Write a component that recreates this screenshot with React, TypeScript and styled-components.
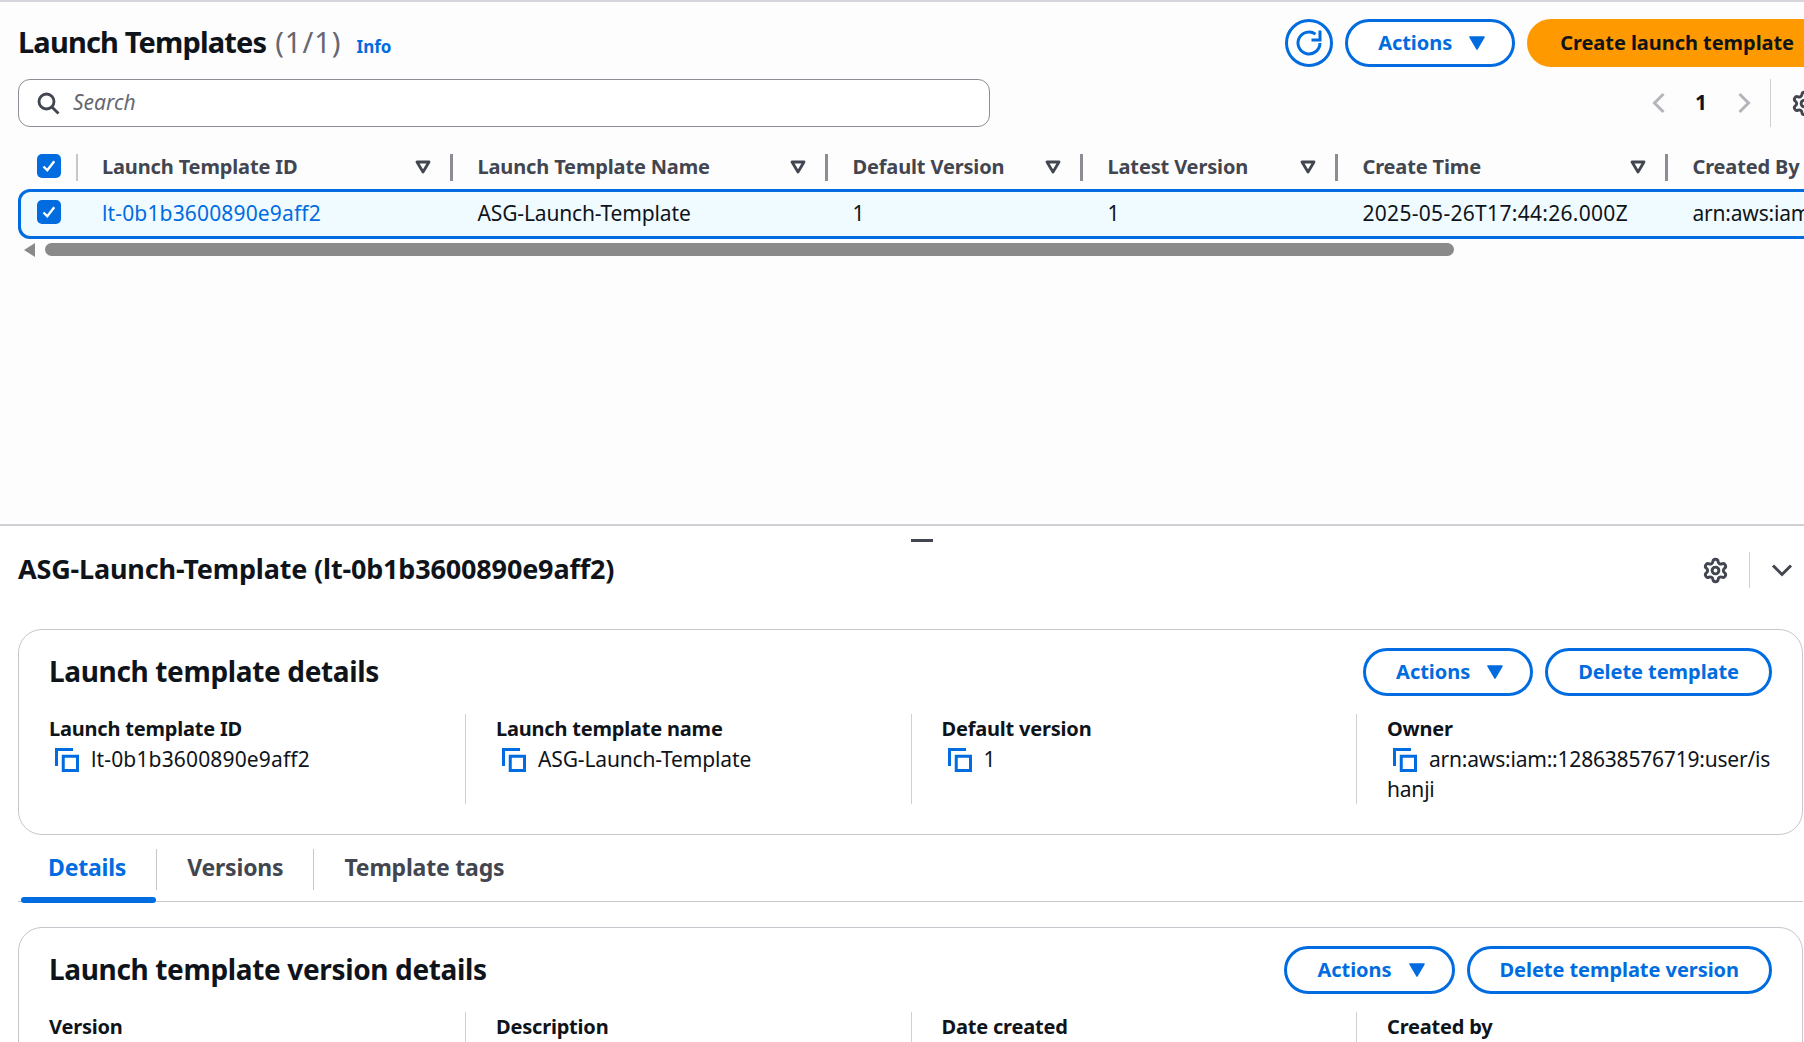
import React from "react";
import styled, { createGlobalStyle } from "styled-components";
import { Settings } from "lucide-react";

const GlobalStyle = createGlobalStyle`
  html, body {
    margin: 0;
    padding: 0;
    overflow: hidden;
    background: #fff;
  }
  body {
    font-family: "Noto Sans", "Open Sans", sans-serif;
    font-size: 21px;
    line-height: 30px;
    color: #0f141a;
  }
  * {
    box-sizing: border-box;
  }
`;

const Page = styled.div`
  width: 1804px;
  height: 1042px;
  overflow: hidden;
`;

const TopPanel = styled.section`
  height: 526px;
  padding-top: 19px;
  background: #fdfdfd;
  border-top: 2px solid #d5d5dc;
  border-bottom: 2px solid #d0d0d4;
`;

const HeaderRow = styled.div`
  display: flex;
  align-items: center;
  width: 1827px;
  height: 48px;
  margin-top: -2px;
  padding-left: 18px;
`;

const PageTitle = styled.h1`
  margin: -2px 0 0;
  font-size: 29px;
  line-height: 48px;
  font-weight: 700;
  letter-spacing: -0.85px;
`;

const Count = styled.span`
  font-weight: 400;
  color: #656871;
  margin-left: 9px;
  letter-spacing: 1px;
`;

const InfoLink = styled.a`
  color: #006ce0;
  font-size: 17px;
  font-weight: 700;
  margin-left: 15px;
  margin-top: 8px;
`;

const HeaderActions = styled.div`
  display: flex;
  gap: 12px;
  margin-left: auto;
`;

const IconButton = styled.button`
  display: flex;
  align-items: center;
  justify-content: center;
  width: 48px;
  height: 48px;
  padding: 0;
  background: #fff;
  border: 3px solid #006ce0;
  border-radius: 50%;
`;

const Button = styled.button`
  display: flex;
  align-items: center;
  justify-content: center;
  height: 48px;
  padding: 0 30px;
  font: 700 20px/30px "Noto Sans", sans-serif;
  letter-spacing: -0.05px;
  color: #006ce0;
  background: #fff;
  border: 3px solid #006ce0;
  border-radius: 24px;
  white-space: nowrap;
`;

const MenuButton = styled(Button)`
  gap: 17px;
  padding: 0 27px 0 30px;
`;

const PrimaryButton = styled(Button)`
  color: #0f141a;
  background: #ff9900;
  border-color: #ff9900;
`;

const SearchRow = styled.div`
  display: flex;
  align-items: center;
  width: 1818px;
  height: 48px;
  margin-top: 12px;
  padding-left: 18px;
`;

const SearchBox = styled.div`
  display: flex;
  align-items: center;
  gap: 13px;
  width: 972px;
  height: 48px;
  padding-left: 17px;
  color: #424650;
  background: #fff;
  border: 1.5px solid #8c8c94;
  border-radius: 12px;
`;

const SearchInput = styled.span`
  margin-top: -2px;
  font-style: italic;
  color: #656871;
`;

const Pagination = styled.div`
  display: flex;
  align-items: center;
  height: 48px;
  margin-left: auto;
`;

const PageNumber = styled.span`
  width: 61px;
  margin-top: -2px;
  text-align: center;
  font-weight: 700;
`;

const PageDivider = styled.div`
  width: 1.5px;
  height: 48px;
  margin: 0 20px 0 14px;
  background: #d0d0d4;
`;

const Columns = "59.5px 375.5px 375px 255px 255px 330px 300px";

const TableHeader = styled.div`
  display: grid;
  grid-template-columns: ${Columns};
  width: 1850px;
  height: 35px;
  margin: 27px 0 0 18px;
`;

const HeaderCell = styled.div`
  display: flex;
  align-items: center;
  justify-content: space-between;
  height: 27px;
  padding: 0 19px 2px 24.5px;
  font-size: 20px;
  font-weight: 700;
  color: #424650;
  letter-spacing: -0.15px;
  border-right: 3px solid #8c8c94;
`;

const SelectCell = styled.div`
  display: flex;
  align-items: flex-start;
  height: 27px;
  padding-left: 19px;
  border-right: 2px solid #c6c6cd;
`;

const TableRow = styled.div`
  display: grid;
  grid-template-columns: ${Columns};
  align-items: center;
  width: 1850px;
  height: 50px;
  margin-left: 18px;
  background: #f0fbff;
  border-radius: 12px 0 0 12px;
  box-shadow: inset 0 0 0 3px #006ce0;
`;

const RowSelect = styled.div`
  display: flex;
  align-items: center;
  padding: 0 0 4px 19px;
`;

const RowCell = styled.div<{ $spacing?: number }>`
  padding: 0 0 3px 24.5px;
  white-space: nowrap;
  letter-spacing: ${(p) => p.$spacing ?? 0}px;
`;

const RowLink = styled.a`
  color: #006ce0;
`;

const CheckBox = styled.span`
  display: flex;
  align-items: center;
  justify-content: center;
  width: 24px;
  height: 24px;
  background: #006ce0;
  border-radius: 5px;
`;

const ScrollTrack = styled.div`
  display: flex;
  align-items: center;
  height: 13px;
  margin: 4px 0 0 24px;
`;

const ScrollArrow = styled.span`
  width: 0;
  height: 0;
  border-top: 7px solid transparent;
  border-bottom: 7px solid transparent;
  border-right: 11px solid #8a8a8a;
  margin-right: 10px;
`;

const ScrollThumb = styled.div`
  width: 1409px;
  height: 13px;
  background: #8a8a8a;
  border-radius: 7px;
`;

const BottomPanel = styled.section`
  position: relative;
  padding: 26px 1px 0 18px;
`;

const DragHandle = styled.span`
  position: absolute;
  top: 13px;
  left: 911px;
  width: 22px;
  height: 3px;
  background: #424650;
`;

const SplitHeader = styled.div`
  display: flex;
  align-items: center;
  height: 36px;
`;

const SplitTitle = styled.h2`
  margin: -3px 0 0;
  font-size: 27px;
  line-height: 36px;
  font-weight: 700;
  letter-spacing: -0.17px;
`;

const SplitTools = styled.div`
  display: flex;
  align-items: center;
  margin-left: auto;
  padding-right: 9px;
`;

const SplitDivider = styled.div`
  width: 1.5px;
  height: 36px;
  margin: 0 20px 0 20px;
  background: #d0d0d4;
`;

const Card = styled.div<{ $top: number }>`
  margin-top: ${(p) => p.$top}px;
  padding: 18px 30px 30px 30px;
  background: #fff;
  border: 1.5px solid #c6c6cd;
  border-radius: 24px;
`;

const CardHeader = styled.div`
  display: flex;
  align-items: center;
  justify-content: space-between;
  height: 48px;
`;

const CardTitle = styled.h3`
  margin: -2px 0 0;
  font-size: 28px;
  line-height: 36px;
  font-weight: 700;
  letter-spacing: -0.35px;
`;

const CardButtons = styled.div`
  display: flex;
  gap: 12px;
`;

const FieldGrid = styled.div`
  display: grid;
  grid-template-columns: 416px 445.5px 445.5px 1fr;
  margin: 18px -4px 0 0;
`;

const Field = styled.div<{ $first?: boolean }>`
  min-height: 90px;
  padding-left: ${(p) => (p.$first ? "0" : "30px")};
  border-left: ${(p) => (p.$first ? "none" : "1.5px solid #d0d0d4")};
`;

const FieldLabel = styled.div`
  font-size: 20px;
  font-weight: 700;
  letter-spacing: -0.2px;
`;

const FieldValue = styled.div<{ $spacing?: number }>`
  word-break: break-all;
  letter-spacing: ${(p) => p.$spacing ?? 0}px;
`;

const CopyIcon = styled.svg`
  width: 24px;
  height: 24px;
  margin: 0 12px 0 6px;
  vertical-align: -5px;
`;

const Tabs = styled.div`
  display: flex;
  height: 67px;
  padding-top: 14px;
  border-bottom: 1.5px solid #c6c6cd;
`;

const Tab = styled.div<{ $active?: boolean; $last?: boolean }>`
  position: relative;
  height: 41px;
  padding: 0 30px;
  font-size: 23px;
  font-weight: 700;
  line-height: 37px;
  letter-spacing: -0.2px;
  color: ${(p) => (p.$active ? "#006ce0" : "#424650")};
  border-right: ${(p) => (p.$last ? "none" : "1.5px solid #c6c6cd")};

  &::after {
    content: ${(p) => (p.$active ? '""' : "none")};
    position: absolute;
    left: 3px;
    right: 0;
    top: 48px;
    height: 6px;
    background: #006ce0;
    border-radius: 3px;
  }
`;

const Copy = () => (
  <CopyIcon viewBox="0 0 16 16" fill="none" stroke="#006ce0" strokeWidth="2">
    <path d="M1 12V1h11" />
    <path d="M5.5 5.5h9.5v9.5H5.5z" />
  </CopyIcon>
);

const Caret = () => (
  <svg width="16" height="14" viewBox="0 0 16 14">
    <path d="M1 1h14L8 13z" fill="#006ce0" stroke="#006ce0" strokeWidth="1.5" strokeLinejoin="round" />
  </svg>
);

const Check = () => (
  <svg width="16" height="16" viewBox="0 0 16 16" fill="none" stroke="#fff" strokeWidth="2.4">
    <path d="M2.5 8.5l3.8 3.8 7-9" />
  </svg>
);

const FilterIcon = () => (
  <svg width="16" height="14" viewBox="0 0 16 14" fill="none" stroke="#424650" strokeWidth="2.8" strokeLinejoin="round">
    <path d="M2 2h12L8 12z" />
  </svg>
);

const Chevron = ({ d, color }: { d: string; color: string }) => (
  <svg width="24" height="24" viewBox="0 0 16 16" fill="none" stroke={color} strokeWidth="2">
    <path d={d} />
  </svg>
);

const ActionsButton = () => (
  <MenuButton>
    Actions
    <Caret />
  </MenuButton>
);

const columns = [
  "Launch Template ID",
  "Launch Template Name",
  "Default Version",
  "Latest Version",
  "Create Time",
];

export default function App() {
  return (
    <Page>
      <GlobalStyle />
      <TopPanel>
        <HeaderRow>
          <PageTitle>
            Launch Templates<Count>(1/1)</Count>
          </PageTitle>
          <InfoLink>Info</InfoLink>
          <HeaderActions>
            <IconButton>
              <svg width="30" height="30" viewBox="-15 -15 30 30" fill="none" stroke="#006ce0" strokeWidth="3">
                <path d="M11 0A11 11 0 1 1 6.5 -8.9" />
                <path d="M11 -12.5V-3H2.5" />
              </svg>
            </IconButton>
            <ActionsButton />
            <PrimaryButton>Create launch template</PrimaryButton>
          </HeaderActions>
        </HeaderRow>

        <SearchRow>
          <SearchBox>
            <svg width="24" height="24" viewBox="0 0 16 16" fill="none" stroke="#424650" strokeWidth="1.9">
              <circle cx="7" cy="7" r="5" />
              <path d="M10.6 10.6L15 15" />
            </svg>
            <SearchInput>Search</SearchInput>
          </SearchBox>
          <Pagination>
            <Chevron d="M11 2L5 8l6 6" color="#b4b4bb" />
            <PageNumber>1</PageNumber>
            <Chevron d="M5 2l6 6-6 6" color="#b4b4bb" />
            <PageDivider />
            <Settings size={27} color="#424650" strokeWidth={2.6} />
          </Pagination>
        </SearchRow>

        <TableHeader>
          <SelectCell>
            <CheckBox>
              <Check />
            </CheckBox>
          </SelectCell>
          {columns.map((c) => (
            <HeaderCell key={c}>
              {c}
              <FilterIcon />
            </HeaderCell>
          ))}
          <HeaderCell>Created By</HeaderCell>
        </TableHeader>

        <TableRow>
          <RowSelect>
            <CheckBox>
              <Check />
            </CheckBox>
          </RowSelect>
          <RowCell $spacing={0.15}>
            <RowLink>lt-0b1b3600890e9aff2</RowLink>
          </RowCell>
          <RowCell $spacing={-0.15}>ASG-Launch-Template</RowCell>
          <RowCell>1</RowCell>
          <RowCell>1</RowCell>
          <RowCell $spacing={0.3}>2025-05-26T17:44:26.000Z</RowCell>
          <RowCell $spacing={-0.2}>arn:aws:iam::128638576719:user/ishanji</RowCell>
        </TableRow>

        <ScrollTrack>
          <ScrollArrow />
          <ScrollThumb />
        </ScrollTrack>
      </TopPanel>

      <BottomPanel>
        <DragHandle />
        <SplitHeader>
          <SplitTitle>ASG-Launch-Template (lt-0b1b3600890e9aff2)</SplitTitle>
          <SplitTools>
            <Settings size={27} color="#424650" strokeWidth={2.6} />
            <SplitDivider />
            <Chevron d="M2 5l6 6 6-6" color="#424650" />
          </SplitTools>
        </SplitHeader>

        <Card $top={41}>
          <CardHeader>
            <CardTitle>Launch template details</CardTitle>
            <CardButtons>
              <ActionsButton />
              <Button>Delete template</Button>
            </CardButtons>
          </CardHeader>
          <FieldGrid>
            <Field $first>
              <FieldLabel>Launch template ID</FieldLabel>
              <FieldValue $spacing={0.15}>
                <Copy />
                lt-0b1b3600890e9aff2
              </FieldValue>
            </Field>
            <Field>
              <FieldLabel>Launch template name</FieldLabel>
              <FieldValue $spacing={-0.15}>
                <Copy />
                ASG-Launch-Template
              </FieldValue>
            </Field>
            <Field>
              <FieldLabel>Default version</FieldLabel>
              <FieldValue>
                <Copy />1
              </FieldValue>
            </Field>
            <Field>
              <FieldLabel>Owner</FieldLabel>
              <FieldValue $spacing={-0.2}>
                <Copy />
                arn:aws:iam::128638576719:user/ishanji
              </FieldValue>
            </Field>
          </FieldGrid>
        </Card>

        <Tabs>
          <Tab $active>Details</Tab>
          <Tab>Versions</Tab>
          <Tab $last>Template tags</Tab>
        </Tabs>

        <Card $top={25}>
          <CardHeader>
            <CardTitle>Launch template version details</CardTitle>
            <CardButtons>
              <ActionsButton />
              <Button>Delete template version</Button>
            </CardButtons>
          </CardHeader>
          <FieldGrid>
            <Field $first>
              <FieldLabel>Version</FieldLabel>
            </Field>
            <Field>
              <FieldLabel>Description</FieldLabel>
            </Field>
            <Field>
              <FieldLabel>Date created</FieldLabel>
            </Field>
            <Field>
              <FieldLabel>Created by</FieldLabel>
            </Field>
          </FieldGrid>
        </Card>
      </BottomPanel>
    </Page>
  );
}
